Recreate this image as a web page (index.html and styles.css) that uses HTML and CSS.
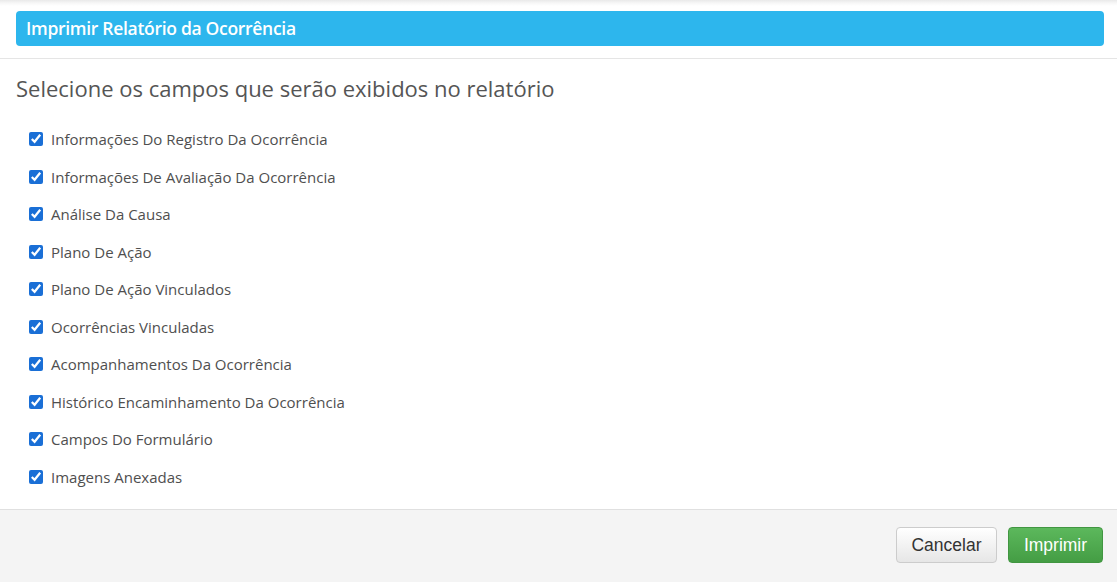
FILE: index.html
```html
<!DOCTYPE html>
<html lang="pt-BR">
<head>
<meta charset="utf-8">
<title>Imprimir Relatório da Ocorrência</title>
<link rel="stylesheet" href="styles.css">
</head>
<body>
<div class="modal">
  <div class="modal-header">
    <div class="title-bar">Imprimir Relatório da Ocorrência</div>
  </div>
  <div class="modal-body">
    <h3 class="subtitle">Selecione os campos que serão exibidos no relatório</h3>
    <ul class="field-list">
      <li class="field"><input type="checkbox" checked><span>Informações Do Registro Da Ocorrência</span></li>
      <li class="field"><input type="checkbox" checked><span>Informações De Avaliação Da Ocorrência</span></li>
      <li class="field"><input type="checkbox" checked><span>Análise Da Causa</span></li>
      <li class="field"><input type="checkbox" checked><span>Plano De Ação</span></li>
      <li class="field"><input type="checkbox" checked><span>Plano De Ação Vinculados</span></li>
      <li class="field"><input type="checkbox" checked><span>Ocorrências Vinculadas</span></li>
      <li class="field"><input type="checkbox" checked><span>Acompanhamentos Da Ocorrência</span></li>
      <li class="field"><input type="checkbox" checked><span>Histórico Encaminhamento Da Ocorrência</span></li>
      <li class="field"><input type="checkbox" checked><span>Campos Do Formulário</span></li>
      <li class="field"><input type="checkbox" checked><span>Imagens Anexadas</span></li>
    </ul>
  </div>
  <div class="modal-footer">
    <button class="btn btn-default">Cancelar</button>
    <button class="btn btn-success">Imprimir</button>
  </div>
</div>
</body>
</html>
```

FILE: styles.css
```css
* { box-sizing: border-box; }
html, body { margin: 0; padding: 0; }
body {
  background: #ffffff;
  font-family: "Open Sans", "Liberation Sans", sans-serif;
  color: #555555;
}
.modal {
  width: 1117px;
  height: 582px;
  display: flex;
  flex-direction: column;
  background: linear-gradient(to bottom, #e9e9e9 0px, #f7f7f7 3px, #ffffff 6px);
}
.modal-header {
  padding: 11px 13px 12px 16px;
  border-bottom: 1px solid #e5e5e5;
}
.title-bar {
  height: 35px;
  background: #2db6ed;
  border-radius: 4px;
  color: #ffffff;
  font-weight: 600;
  font-size: 17.5px;
  line-height: 35px;
  padding-left: 10px;
  letter-spacing: -0.3px;
}
.modal-body {
  flex: 1;
  padding: 15px 16px 0 16px;
}
.subtitle {
  margin: 0;
  font-size: 22px;
  font-weight: 500;
  line-height: 28px;
  color: #555555;
}
.field-list {
  list-style: none;
  margin: 27px 0 0 0;
  padding: 0 0 0 13px;
  display: flex;
  flex-direction: column;
  gap: 17.5px;
}
.field {
  display: flex;
  align-items: center;
  height: 20px;
  font-size: 15px;
  color: #4f4f4f;
}
.field input {
  margin: 0 8px 0 0;
  width: 14px;
  height: 14px;
  accent-color: #1a6fd6;
}
.modal-footer {
  height: 73px;
  border-top: 1px solid #e0e0e0;
  background: #f4f4f4;
  display: flex;
  justify-content: flex-end;
  align-items: flex-start;
  gap: 11px;
  padding: 17px 14px 0 0;
}
.btn {
  height: 36px;
  font-family: "Liberation Sans", Arial, sans-serif;
  font-size: 17.5px;
  border-radius: 4px;
  padding: 0;
  cursor: pointer;
}
.btn-default {
  width: 101px;
  color: #333333;
  background: linear-gradient(to bottom, #ffffff 0%, #e6e6e6 100%);
  border: 1px solid #cccccc;
}
.btn-success {
  width: 95px;
  color: #ffffff;
  background: linear-gradient(to bottom, #5cb85c 0%, #449d44 100%);
  border: 1px solid #419641;
}
```
